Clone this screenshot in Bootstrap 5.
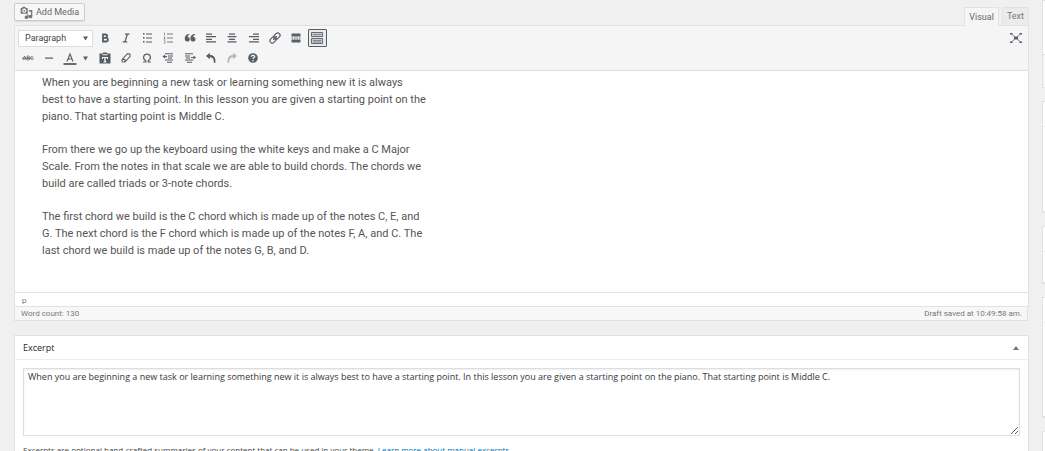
<!DOCTYPE html>
<html lang="en">
<head>
<meta charset="utf-8">
<meta name="viewport" content="width=device-width, initial-scale=1">
<title>Edit Post</title>
<link href="https://cdn.jsdelivr.net/npm/bootstrap@5.3.0/dist/css/bootstrap.min.css" rel="stylesheet">
<style>
  :root { --line: #e2e2e2; --icon: #555d66; }
  body { background: #f0f0f0; color: #444; font: 9px/14px "Open Sans", "Noto Sans", sans-serif; }
  .page { height: 100vh; padding-left: 14px; gap: 13px; }
  .main-col { min-width: 0; }
  .side-col { flex: 0 0 3px; gap: 13px; }
  .side-box { background: #fff; border: 1px solid var(--line); border-right: 0; border-bottom-width: 2px; flex-shrink: 0; }
  .side-title { height: 25px; border-bottom: 1px solid #eee; }
  .side-first { height: 88px; padding-top: 53px; }
  .side-actions { height: 33px; background: #f5f5f5; border-top: 1px solid #ddd; }
  .h-cats { height: 112px; } .h-tags { height: 58px; } .h-image { height: 121px; } .h-more { height: 60px; }

  .head-row { height: 25px; padding-top: 3px; }
  .media-btn, .tab-btn, .format, .status, .path { font-family: Roboto, "Open Sans", sans-serif; }
  .media-btn { height: 18px; padding: 0 5px; gap: 3px; font-size: 9px; line-height: 14px; color: #666; background: #f7f7f7; border: 1px solid #ccc; border-radius: 2px; box-shadow: 0 1px 0 #ddd; }
  .tabs { gap: 3px; }
  .tab-btn { height: 18px; padding: 0 4px; font-size: 9px; line-height: 17px; color: #777; background: #ebebeb; border: 1px solid var(--line); border-bottom: 0; }
  .tab-btn.active { height: 19px; margin-bottom: -1px; color: #666; background: #f5f5f5; position: relative; z-index: 1; }

  .editor { background: #fff; border: 1px solid var(--line); }
  .tools { background: #f5f5f5; border-bottom: 1px solid #ddd; padding: 2px 3px; }
  .tool-row { height: 20px; }
  .tool { width: 19px; height: 18px; padding: 0; border: 1px solid transparent; border-radius: 1px; background: none; color: var(--icon); display: flex; align-items: center; justify-content: center; }
  .tool.pressed { border-color: var(--icon); background: #ebebeb; }
  .tool svg { width: 14px; height: 14px; flex-shrink: 0; }
  .format { width: 75px; height: 17px; padding: 0 16px 0 6px; font-size: 9px; line-height: 14px; color: #444; border: 1px solid #ddd; border-radius: 0; margin-right: 2px;
    background: #fff url("data:image/svg+xml,%3Csvg xmlns='http://www.w3.org/2000/svg' viewBox='0 0 6 5'%3E%3Cpath d='M0 0h6L3 5z' fill='%23555d66'/%3E%3C/svg%3E") no-repeat right 4px center / 5px 5px; }
  .group-a { width: 232px; }
  .group-b { width: 77px; gap: 2px; }
  .group-c { width: 168px; }
  .group-b .narrow { width: 9px; }
  .group-b .narrow svg { width: 5px; height: 5px; }
  .copy { height: 221px; padding: 3px 27px; font: 400 11px/17px Roboto, "Liberation Sans", sans-serif; color: #555; }
  .copy p { max-width: 386px; margin: 0 0 16px; }
  .path { height: 14px; padding: 1px 7px; border-top: 1px solid var(--line); font-size: 8px; color: #777; }
  .status { margin-right: 1px; height: 14px; padding: 0 5px 0 6px; background: #f7f7f7; border: 1px solid var(--line); border-top: 0; font-size: 8px; line-height: 14px; color: #777; }

  .excerpt { margin-top: 14px; background: #fff; border: 1px solid var(--line); height: 140px; }
  .excerpt-head { height: 24px; padding: 0 9px 0 8px; border-bottom: 1px solid #eee; }
  .excerpt-head h2 { margin: 0; font-size: 9px; line-height: 23px; font-weight: 400; color: #23282d; }
  .toggle { padding: 0; border: 0; background: none; display: flex; color: #72777c; }
  .toggle svg { width: 6px; height: 4px; }
  .excerpt-body { padding: 8px; }
  .excerpt-text { display: block; width: 100%; height: 68px; min-height: 0; padding: 1px 4px; border: 1px solid #ddd; border-radius: 0; box-shadow: inset 0 1px 2px rgba(0,0,0,.07); font-size: 9px; line-height: 14px; color: #32373c; }
  .hint { margin: 7px 0 0; font-size: 8px; line-height: 14px; }
  .hint a { color: #0073aa; text-decoration: none; }
</style>
</head>
<body>
<div class="page d-flex overflow-hidden">
  <main class="main-col flex-grow-1">
    <div class="head-row d-flex justify-content-between">
      <button type="button" class="media-btn d-flex align-items-center">
        <svg width="13" height="13" viewBox="0 0 20 20" fill="#72777c" aria-hidden="true"><path fill-rule="evenodd" d="M1 3h2l1-2h4l1 2h2l1 1v8H1zM6.500 4a3.300 3.300 0 1 0 .01 0zM6.500 6a1.300 1.300 0 1 1-.01 0z"/><path d="M14 6h5v10a3 2.500 0 1 1-2-2V9h-3zM11 13h2v4a3 2.500 0 1 1-2-2z"/></svg>
        <span>Add Media</span>
      </button>
      <div class="tabs d-flex align-items-end" role="tablist">
        <button type="button" class="tab-btn active" role="tab" aria-selected="true">Visual</button>
        <button type="button" class="tab-btn" role="tab" aria-selected="false">Text</button>
      </div>
    </div>

    <section class="editor">
      <div class="tools" role="toolbar" aria-label="Formatting">
        <div class="tool-row d-flex align-items-center">
          <select class="form-select format" aria-label="Format"><option>Paragraph</option><option>Heading 1</option></select>
          <div class="group-a d-flex justify-content-between">
            <button type="button" class="tool" aria-label="Bold"><svg viewBox="0 0 14 14" fill="none" stroke="currentColor" stroke-width="1.800"><path d="M5 3.500h2.500a1.600 1.600 0 0 1 0 3.300H5h3a1.800 1.800 0 0 1 0 3.700H5zM5 2.600v8.800"/></svg></button>
            <button type="button" class="tool" aria-label="Italic"><svg viewBox="0 0 14 14" fill="none" stroke="currentColor" stroke-width="1.200"><path d="M6 3.200h4.500M3.800 10.800h4.500M8.300 3.300L6 10.700"/></svg></button>
            <button type="button" class="tool" aria-label="Bulleted list"><svg viewBox="0 0 14 14" fill="currentColor"><path d="M3 2h1.500v1.500H3zM3 6h1.500v1.500H3zM3 10h1.500v1.500H3z"/><path d="M6 2.500h6v1H6zM6 6.500h6v1H6zM6 10.500h6v1H6z"/></svg></button>
            <button type="button" class="tool" aria-label="Numbered list"><svg viewBox="0 0 14 14" fill="currentColor" opacity=".8"><path d="M3 1.500h.8v2.800H3zM2.800 5.700h1.500v1L3.600 8h.8v.6H2.700V8l.8-1.500h-.7zM2.800 9.500h1.500v3H2.800v-.6h.8v-.6H3v-.5h.6v-.7h-.8zM6 2.500h6v1H6zM6 6.500h6v1H6zM6 10.500h6v1H6z"/></svg></button>
            <button type="button" class="tool" aria-label="Blockquote"><svg viewBox="0 0 14 14" fill="currentColor"><path d="M6.300 3v1C5 4.300 4.500 5.200 4.600 6c1.300 0 2.100.9 2.100 2.200 0 1.400-1 2.300-2.400 2.300-1.600 0-2.600-1.200-2.600-3C1.700 5 3.500 3 6.300 3zM12 3v1c-1.300.3-1.800 1.200-1.700 2 1.300 0 2.100.9 2.100 2.200 0 1.400-1 2.300-2.400 2.300-1.600 0-2.600-1.200-2.600-3C7.400 5 9.200 3 12 3z"/></svg></button>
            <button type="button" class="tool" aria-label="Align left"><svg viewBox="0 0 14 14" fill="currentColor"><path d="M2 2.500h6v1.200H2zM2 5h10v1.200H2zM2 7.700h6v1.200H2zM2 10.300h10v1.200H2z"/></svg></button>
            <button type="button" class="tool" aria-label="Align center"><svg viewBox="0 0 14 14" fill="currentColor"><path d="M4 2.500h6v1.200H4zM2.500 5h9v1.200h-9zM4 7.700h6v1.200H4zM2.500 10.300h9v1.200h-9z"/></svg></button>
            <button type="button" class="tool" aria-label="Align right"><svg viewBox="0 0 14 14" fill="currentColor"><path d="M6 2.500h6v1.200H6zM2 5h10v1.200H2zM6 7.700h6v1.200H6zM2 10.300h10v1.200H2z"/></svg></button>
            <button type="button" class="tool" aria-label="Insert link"><svg viewBox="0 0 14 14" fill="none" stroke="currentColor" stroke-width="1.200"><g transform="rotate(-45 7 7)"><rect x="0.800" y="4.700" width="7" height="4.600" rx="2.300"/><rect x="6.200" y="4.700" width="7" height="4.600" rx="2.300"/><path d="M4.500 7h5"/></g></svg></button>
            <button type="button" class="tool" aria-label="Read more tag"><svg viewBox="0 0 14 14" fill="currentColor"><path d="M2.500 2.500h9v3h-9zM2.500 6.500H4v1H2.500zM5 6.500h1.500v1H5zM7.500 6.500H9v1H7.500zM10 6.500h1.500v1H10zM2.500 8.500h9v3h-9z"/></svg></button>
            <button type="button" class="tool pressed" aria-label="Toolbar toggle" aria-pressed="true"><svg viewBox="0 0 14 14" fill="#c9ccd0" stroke="currentColor" stroke-width=".9"><path d="M1.500 1.500h11v4h-11zM1.500 7.500h11v5h-11z"/><path d="M3 3.500h8M3 9.500h8M3 11h8" stroke-width=".6"/></svg></button>
          </div>
          <button type="button" class="tool ms-auto" aria-label="Fullscreen"><svg viewBox="0 0 14 14" fill="currentColor"><path d="M1 2h2.500v1.500H1zM10.500 2H13v1.500h-2.500zM1 10.500h2.500V12H1zM10.500 10.500H13V12h-2.500zM5 5.500h4v3H5z"/><path d="M2.500 3l3 2.700M8.500 5.700l3-2.700M2.500 11l3-2.700M8.500 8.300l3 2.700" stroke="currentColor" stroke-width=".8"/></svg></button>
        </div>
        <div class="tool-row d-flex align-items-center">
          <div class="group-b d-flex">
            <button type="button" class="tool" aria-label="Strikethrough"><svg viewBox="0 0 14 14" fill="none" stroke="currentColor" stroke-width=".7"><path d="M2 9l1.500-4L5 9M2.500 8h2M6 9V5h1.500a1 1 0 0 1 0 2H6h1.700a1 1 0 0 1 0 2zM12 5.500a1.700 1.700 0 1 0 0 3M1 7.200h12"/></svg></button>
            <button type="button" class="tool" aria-label="Horizontal line"><svg viewBox="0 0 14 14" fill="currentColor"><path d="M3 6.500h8v1.200H3z"/></svg></button>
            <button type="button" class="tool" aria-label="Text color"><svg viewBox="0 0 14 14" fill="none" stroke="currentColor"><path d="M4 10.500l3-7.500 3 7.500M5 8h4" stroke-width="1.100"/><path d="M0.500 13h13" stroke-width="1.800"/></svg></button>
            <button type="button" class="tool narrow" aria-label="Choose text color"><svg viewBox="0 0 6 5" fill="currentColor"><path d="M0 0h6L3 5z"/></svg></button>
          </div>
          <div class="group-c d-flex justify-content-between">
            <button type="button" class="tool" aria-label="Paste as text"><svg viewBox="0 0 14 14" fill="currentColor"><path fill-rule="evenodd" d="M5 1.500h4v1h3.500v10h-11v-10H5zM4.500 3.300v1h5v-1zM4 6v2h1V7h1.300v3.500H5.500v1h3v-1h-.8V7H9v1h1V6z"/></svg></button>
            <button type="button" class="tool" aria-label="Clear formatting"><svg viewBox="0 0 14 14" fill="none" stroke="currentColor" stroke-width="1.100"><path d="M8.500 2.700l2.300.3.300 2.300L6 11l-2.700-.3-.3-2zM3.200 8.200L6 8.500V11"/></svg></button>
            <button type="button" class="tool" aria-label="Special character"><svg viewBox="0 0 14 14" fill="none" stroke="currentColor" stroke-width="1.200"><path d="M3 11h2.800V9.800C2.200 7.500 3.300 3.200 7 3.200s4.800 4.300 1.200 6.600V11H11"/></svg></button>
            <button type="button" class="tool" aria-label="Decrease indent"><svg viewBox="0 0 14 14" fill="currentColor"><path d="M4 2.300h8v1H4zM7 4.400h5v1H7zM7 6.500h4v1H7zM4 8.600h8v1H4zM6 10.700h5v1H6zM1.500 5.500L4 3.600V5h2v1.200H4v1.300z"/></svg></button>
            <button type="button" class="tool" aria-label="Increase indent"><svg viewBox="0 0 14 14" fill="currentColor"><path d="M2 2.300h8v1H2zM2 4.400h5v1H2zM3 6.500h4v1H3zM2 8.600h8v1H2zM4 10.700h5v1H4zM13 6.500L10.500 8.500V7.100H8V5.900h2.500V4.500z"/></svg></button>
            <button type="button" class="tool" aria-label="Undo"><svg viewBox="0 0 14 14" fill="currentColor"><path d="M5.800 1.800V4c4 0 6 2.500 5.700 7.800H9.800C10 8 8.800 6.300 5.800 6.200v2L2 5z"/></svg></button>
            <button type="button" class="tool" aria-label="Redo" disabled><svg viewBox="0 0 14 14" fill="currentColor" opacity=".4"><path d="M8.200 1.800V4c-4 0-6 2.500-5.700 7.800h1.700C4 8 5.200 6.300 8.200 6.200v2L12 5z"/></svg></button>
            <button type="button" class="tool" aria-label="Keyboard shortcuts"><svg viewBox="0 0 14 14"><circle cx="7" cy="7" r="4.800" fill="currentColor"/><path d="M5.300 5.800C5.300 3.700 8.700 3.900 8.700 5.600 8.700 6.800 7 6.800 7 8M7 9v1.200" fill="none" stroke="#f5f5f5" stroke-width="1.300"/></svg></button>
          </div>
        </div>
      </div>
      <div class="copy" contenteditable="true" spellcheck="false">
        <p>When you are beginning a new task or learning something new it is always<br>best to have a starting point. In this lesson you are given a starting point on the piano. That starting point is Middle C.</p>
        <p>From there we go up the keyboard using the white keys and make a C Major Scale. From the notes in that scale we are able to build chords. The chords we build are called triads or 3-note chords.</p>
        <p>The first chord we build is the C chord which is made up of the notes C, E, and G. The next chord is the F chord which is made up of the notes F, A, and C. The last chord we build is made up of the notes G, B, and D.</p>
      </div>
      <div class="path">p</div>
    </section>
    <div class="status d-flex justify-content-between"><span>Word count: 130</span><span>Draft saved at 10:49:58 am.</span></div>

    <section class="excerpt">
      <div class="excerpt-head d-flex align-items-center justify-content-between">
        <h2><label for="excerpt">Excerpt</label></h2>
        <button type="button" class="toggle" aria-label="Toggle panel: Excerpt"><svg viewBox="0 0 6 4" fill="currentColor"><path d="M0 4h6L3 0z"/></svg></button>
      </div>
      <div class="excerpt-body">
        <textarea id="excerpt" class="excerpt-text" spellcheck="false">When you are beginning a new task or learning something new it is always best to have a starting point. In this lesson you are given a starting point on the piano. That starting point is Middle C.</textarea>
        <p class="hint">Excerpts are optional hand-crafted summaries of your content that can be used in your theme. <a href="#">Learn more about manual excerpts</a>.</p>
      </div>
    </section>
  </main>
  <aside class="side-col d-flex flex-column">
    <div class="side-box side-first"><div class="side-actions"></div></div>
    <div class="side-box h-cats"><div class="side-title"></div></div>
    <div class="side-box h-tags"><div class="side-title"></div></div>
    <div class="side-box h-image"><div class="side-title"></div></div>
    <div class="side-box h-more"><div class="side-title"></div></div>
  </aside>
</div>
<script src="https://cdn.jsdelivr.net/npm/bootstrap@5.3.0/dist/js/bootstrap.bundle.min.js"></script>
</body>
</html>
